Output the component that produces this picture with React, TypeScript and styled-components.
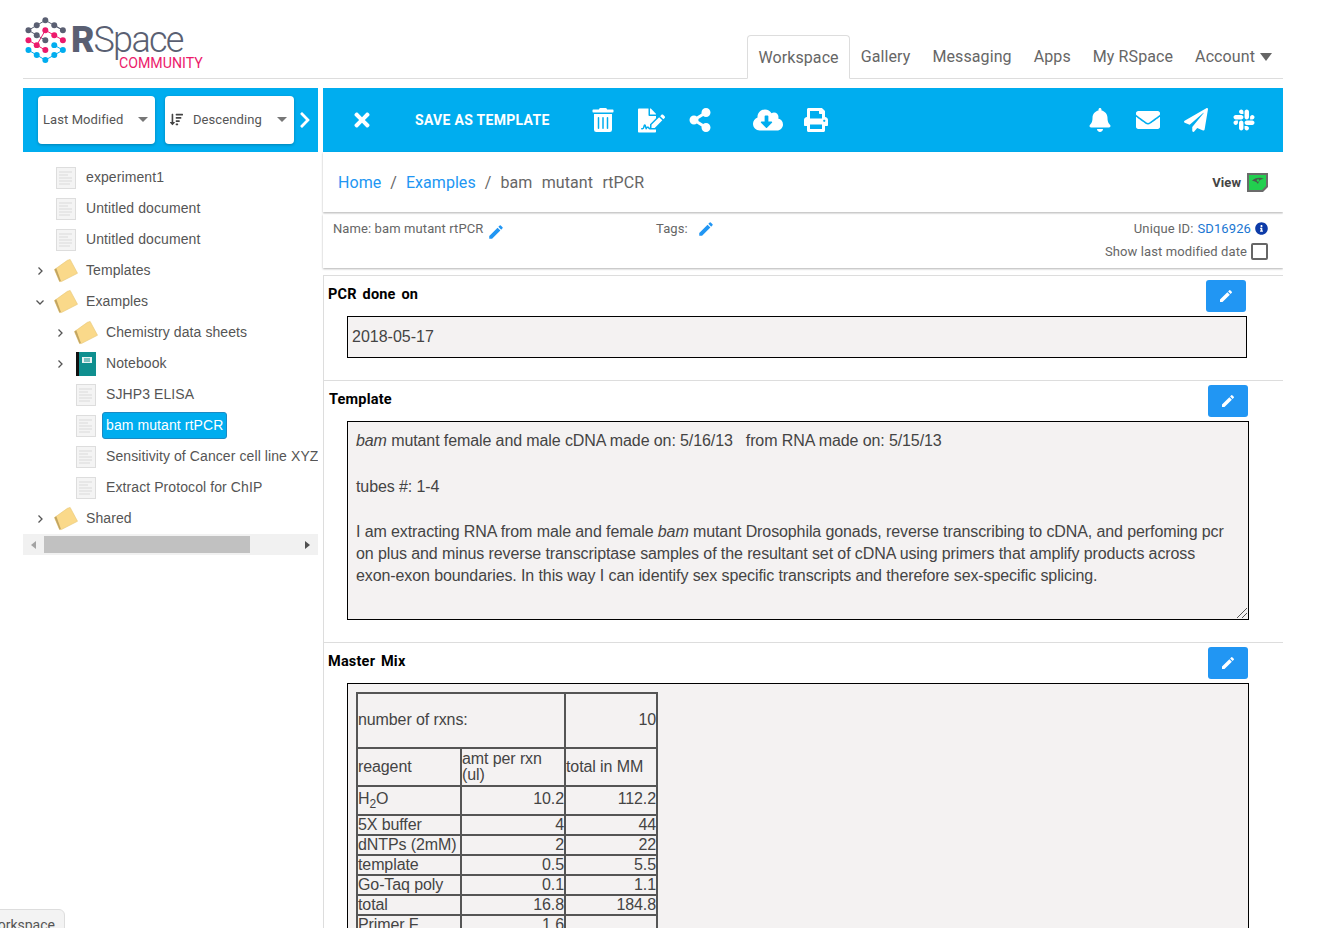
import React from 'react';
import styled, { createGlobalStyle } from 'styled-components';
import {
  FaTimes, FaTrashAlt, FaFileSignature, FaShareAlt, FaCloudDownloadAlt, FaPrint,
  FaBell, FaEnvelope, FaPaperPlane, FaSlack, FaInfoCircle, FaSortAmountDown, FaChevronRight,
} from 'react-icons/fa';
import { MdEdit } from 'react-icons/md';

const GlobalStyle = createGlobalStyle`
  html, body {
    margin: 0;
    height: 100%;
    overflow: hidden;
    background: #fff;
    font-family: Roboto, "Liberation Sans", sans-serif;
  }
`;

const Page = styled.div`
  width: 1260px;
  margin-left: 23px;
  height: 928px;
  overflow: hidden;
`;

const Header = styled.header`
  display: flex;
  justify-content: space-between;
  align-items: flex-end;
  height: 78px;
  border-bottom: 1px solid #ddd;
`;

const Logo = styled.div`
  display: flex;
  align-items: flex-start;
  align-self: flex-start;
  padding-top: 17px;
`;

const Wordmark = styled.div`
  margin-left: 2px;
  margin-top: 3px;
  display: flex;
  flex-direction: column;
  align-items: flex-end;
  color: #5a5f72;
`;

const WordLine = styled.div`
  font-size: 36px;
  line-height: 40px;
  font-weight: 300;
  letter-spacing: -1.7px;
  b { font-weight: 900; letter-spacing: -1px; }
`;

const Community = styled.div`
  margin-top: -4px;
  margin-right: -20px;
  color: #ec1a6b;
  font-size: 14.2px;
  line-height: 14px;
  font-weight: 400;
`;

const Nav = styled.nav`
  display: flex;
  align-items: flex-end;
  padding-right: 11px;
`;

const NavItem = styled.a<{ $active?: boolean; $end?: boolean }>`
  display: flex;
  align-items: center;
  height: 43px;
  padding: 0 ${(p) => (p.$end ? 0 : 11)}px 0 11px;
  box-sizing: border-box;
  font-size: 16px;
  letter-spacing: 0.1px;
  color: #666;
  ${(p) => p.$active && `
    border: 1px solid #ddd;
    border-bottom: 1px solid #fff;
    border-radius: 4px 4px 0 0;
    padding: 0 10px;
    margin-bottom: -1px;
    height: 44px;
  `}
`;

const NavCaret = styled.span`
  display: inline-block;
  margin-left: 5px;
  border-left: 6px solid transparent;
  border-right: 6px solid transparent;
  border-top: 8px solid #666;
`;

const Main = styled.main`
  display: grid;
  grid-template-columns: 295px 960px;
  column-gap: 5px;
  margin-top: 9px;
`;

const SideToolbar = styled.div`
  display: flex;
  align-items: center;
  gap: 10px;
  height: 64px;
  padding-left: 15px;
  background: #00adef;
  color: #fff;
`;

const SelectBox = styled.div<{ $w: number }>`
  display: flex;
  align-items: center;
  width: ${(p) => p.$w}px;
  height: 48px;
  padding: 0 7px 1px 5px;
  box-sizing: border-box;
  background: #fff;
  border-radius: 4px;
  box-shadow: 0 1px 3px rgba(0, 0, 0, 0.25);
  color: #555;
  font-size: 13px;
  letter-spacing: 0.08px;
  svg { color: #444; margin-right: 10px; flex: none; }
`;

const SelectLabel = styled.span`
  flex: 1;
`;

const SelectCaret = styled.span`
  border-left: 5px solid transparent;
  border-right: 5px solid transparent;
  border-top: 5px solid #777;
`;

const Expand = styled.span`
  display: flex;
  margin-left: -8px;
`;

const Tree = styled.div`
  padding-top: 9px;
  overflow: hidden;
`;

const TreeRow = styled.div<{ $level: number }>`
  display: flex;
  align-items: center;
  height: 31px;
  padding-left: ${(p) => p.$level * 20}px;
  white-space: nowrap;
  font-family: "Liberation Sans", Arial, sans-serif;
  font-size: 14px;
  letter-spacing: 0.09px;
  color: #555;
`;

const Arrow = styled.span`
  display: flex;
  justify-content: center;
  width: 34px;
  margin-top: 2px;
  flex: none;
`;

const IconSlot = styled.span`
  display: flex;
  justify-content: center;
  width: 24px;
  margin: 2px 5px 0 -3px;
  flex: none;
`;

const TreeLabel = styled.span<{ $selected?: boolean }>`
  padding: 0 3px;
  height: 27px;
  line-height: 24px;
  margin: 2px 0 0 -1px;
  box-sizing: border-box;
  border-radius: 3px;
  border: 1px solid transparent;
  ${(p) => p.$selected && `
    background: #00adef;
    border-color: #1b8ac4;
    color: #fff;
  `}
`;

const HScroll = styled.div`
  display: flex;
  align-items: center;
  justify-content: space-between;
  height: 21px;
  margin-top: 1px;
  padding: 0 8px;
  background: #f1f1f1;
`;

const ScrollThumb = styled.div`
  width: 206px;
  height: 17px;
  margin: 0 auto 0 8px;
  background: #c1c1c1;
`;

const ScrollLeft = styled.span`
  border-top: 4px solid transparent;
  border-bottom: 4px solid transparent;
  border-right: 5px solid #a3a3a3;
`;

const ScrollRight = styled.span`
  border-top: 4px solid transparent;
  border-bottom: 4px solid transparent;
  border-left: 5px solid #505050;
`;

const Toolbar = styled.div`
  display: flex;
  align-items: center;
  height: 64px;
  padding: 0 27px 0 28px;
  background: #00adef;
  color: #fff;
`;

const ToolIcon = styled.span<{ $left: number }>`
  display: flex;
  margin-left: ${(p) => p.$left}px;
`;

const SaveText = styled.span`
  margin-left: 42px;
  font-size: 14px;
  font-weight: 700;
  letter-spacing: 0.3px;
`;

const Spacer = styled.span`
  flex: 1;
`;

const Breadcrumb = styled.div`
  display: flex;
  align-items: center;
  justify-content: space-between;
  height: 60px;
  padding: 0 15px;
  box-shadow: 0 1px 2px rgba(0, 0, 0, 0.3);
  font-size: 16px;
  letter-spacing: 0.05px;
  color: #666;
`;

const Crumbs = styled.div`
  display: flex;
  gap: 9px;
  word-spacing: 5.5px;
  a { color: #2196f3; }
`;

const ViewTag = styled.div`
  display: flex;
  align-items: center;
  gap: 6px;
  font-size: 13px;
  font-weight: 700;
  color: #444;
`;

const InfoStrip = styled.div`
  display: flex;
  height: 54px;
  margin-top: 2px;
  padding: 7px 15px 0 10px;
  box-sizing: border-box;
  box-shadow: 0 1px 2px rgba(0, 0, 0, 0.3);
  font-size: 13px;
  letter-spacing: 0.1px;
  color: #666;
`;

const InfoField = styled.div<{ $w: number }>`
  display: flex;
  align-items: flex-start;
  width: ${(p) => p.$w}px;
  line-height: 15px;
`;

const Pencil = styled(MdEdit)<{ $left: number; $top: number }>`
  color: #2196f3;
  margin-left: ${(p) => p.$left}px;
  margin-top: ${(p) => p.$top}px;
`;

const InfoRight = styled.div`
  margin-left: auto;
  display: flex;
  flex-direction: column;
  align-items: flex-end;
  gap: 7px;
`;

const InfoLine = styled.div`
  display: flex;
  align-items: center;
  gap: 4px;
  line-height: 15px;
  a { color: #1976d2; }
  svg { color: #0d3ba8; }
`;

const CheckBox = styled.span`
  width: 17px;
  height: 17px;
  box-sizing: border-box;
  border: 2px solid #666;
  border-radius: 2px;
`;

const Document = styled.div`
  margin-top: 7px;
  border: 1px solid #ddd;
  border-bottom: none;
  width: 961px;
  box-sizing: border-box;
`;

const Section = styled.section<{ $pb: number; $last?: boolean }>`
  padding: 4px 0 ${(p) => p.$pb}px;
  border-bottom: ${(p) => (p.$last ? 'none' : '1px solid #ddd')};
`;

const SectionHead = styled.div<{ $pl: number; $pr: number }>`
  display: flex;
  justify-content: space-between;
  align-items: center;
  height: 32px;
  padding: 0 ${(p) => p.$pr}px 0 ${(p) => p.$pl}px;
`;

const SectionTitle = styled.h3`
  margin: 0 0 4px;
  font-size: 14.5px;
  font-weight: 700;
  letter-spacing: 0.2px;
  word-spacing: 2px;
  color: #000;
`;

const EditButton = styled.button`
  display: flex;
  align-items: center;
  justify-content: center;
  width: 40px;
  height: 32px;
  padding: 0;
  border: none;
  border-radius: 3px;
  background: #2196f3;
  color: #fff;
`;

const FieldBox = styled.div<{ $mr: number; $h?: number }>`
  position: relative;
  margin: 4px ${(p) => p.$mr}px 0 23px;
  height: ${(p) => p.$h ?? 40}px;
  border: 1px solid #000;
  background: #f4f2f2;
  font-family: "Liberation Sans", Arial, sans-serif;
  font-size: 16px;
  color: #444;
`;

const DateText = styled.div`
  padding-left: 4px;
  line-height: 39px;
`;

const Prose = styled.div`
  padding: 8px 16px 0 8px;
  line-height: 22px;
  letter-spacing: -0.1px;
`;

const ProseGap = styled.div`
  height: 23.5px;
`;

const ResizeHandle = styled.svg`
  position: absolute;
  right: 0;
  bottom: 0;
`;

const MixTable = styled.table`
  margin: 8px 0 0 8px;
  width: 302px;
  table-layout: fixed;
  border-collapse: collapse;
  font-size: 16px;
  line-height: 16px;
  letter-spacing: -0.1px;

  td {
    border: 2px solid #555;
    padding: 0;
    vertical-align: middle;
  }
`;

const MixCol = styled.col<{ $w: number }>`
  width: ${(p) => p.$w}px;
`;

const Num = styled.td`
  text-align: right;
`;

const MixRow = styled.tr<{ $h: number; $raise?: number }>`
  height: ${(p) => p.$h}px;
  td { padding-bottom: ${(p) => p.$raise ?? 0}px; }
`;

const Sub = styled.sub`
  font-size: 12px;
  line-height: 0;
`;

const FloatTab = styled.div`
  position: fixed;
  left: -20px;
  bottom: -12px;
  width: 85px;
  height: 31px;
  padding: 7px 9px 0 0;
  box-sizing: border-box;
  text-align: right;
  background: #f3f3f3;
  border: 1px solid #ddd;
  border-radius: 6px 6px 0 0;
  font-size: 14px;
  color: #555;
`;

const LogoMark = () => {
  const grey = [[133, 60], [107, 75], [160, 75], [82, 90], [186, 90], [107, 105], [133, 120]];
  const pink = [[133, 90], [160, 105], [82, 120], [186, 120], [107, 135], [133, 150]];
  const blue = [[160, 135], [82, 150], [186, 150], [107, 165], [160, 165], [133, 180]];
  const dot = (c: string) => (p: number[]) => <circle key={p.join()} cx={p[0]} cy={p[1]} r="9" fill={c} />;
  return (
    <svg width="46" height="48" viewBox="66 50 138 145">
      <path d="M133 60L82 90M133 60L186 90M107 105L82 90M107 105L133 120M186 90L160 75" stroke="#5a5f72" strokeWidth="3" fill="none" />
      <path d="M133 90L160 105L186 120M82 120L107 135L133 150M107 135L133 90" stroke="#ec1a6b" strokeWidth="3" fill="none" />
      <path d="M82 150L107 165L133 180L160 165L186 150L160 135" stroke="#00adef" strokeWidth="3" fill="none" />
      {grey.map(dot('#5a5f72'))}
      {pink.map(dot('#ec1a6b'))}
      {blue.map(dot('#00adef'))}
    </svg>
  );
};

const DocIcon = () => (
  <svg width="20" height="22" viewBox="0 0 20 22">
    <rect x="0.5" y="0.5" width="19" height="21" fill="#f4f4f4" stroke="#ddd" />
    <path d="M3 5h13M3 8h9M3 11h13M3 14h13M3 17h11" stroke="#dadada" strokeWidth="1" />
  </svg>
);

const FolderIcon = () => (
  <svg width="26" height="25" viewBox="0 0 26 25">
    <path d="M0.5 11.5L14.5 1.5L17.5 0.5L25.5 15.5L8 24.5L6 24.5Z" fill="#fad98a" stroke="#e6c573" strokeWidth="0.6" strokeLinejoin="round" />
    <path d="M0.5 11.5L6 24.5L7.5 24L2.5 10Z" fill="#c2a561" />
  </svg>
);

const NotebookIcon = () => (
  <svg width="20" height="24" viewBox="0 0 20 24">
    <rect width="20" height="24" fill="#0f8f8f" />
    <rect width="3" height="24" fill="#111" />
    <rect x="6" y="5" width="10" height="6" fill="#e9f3f3" />
    <path d="M8 7h6M8 9h6" stroke="#0f8f8f" />
  </svg>
);

const ViewIcon = () => (
  <svg width="21" height="19" viewBox="0 0 21 19">
    <path d="M0 0H21V14L16 19H0Z" fill="#6b6b6b" />
    <path d="M2 2H19V13L15 17H2Z" fill="#22cf4f" />
    <path d="M5 8C8 4 14 4 17 6C14 6 12 7 11 11C9 8 7 8 5 8Z" fill="#4a5a4e" />
    <circle cx="11" cy="7.5" r="1.2" fill="#22cf4f" />
  </svg>
);

const TreeChevron = ({ down }: { down?: boolean }) => (
  <svg width="10" height="10" viewBox="0 0 10 10" fill="none" stroke="#555" strokeWidth="1.3">
    <path d={down ? 'M1.5 3.5L5 7L8.5 3.5' : 'M3.5 1.5L7 5L3.5 8.5'} />
  </svg>
);

type TreeNode = { label: string; level: number; kind: 'doc' | 'folder' | 'book'; open?: boolean; closed?: boolean; selected?: boolean };

const nodes: TreeNode[] = [
  { label: 'experiment1', level: 0, kind: 'doc' },
  { label: 'Untitled document', level: 0, kind: 'doc' },
  { label: 'Untitled document', level: 0, kind: 'doc' },
  { label: 'Templates', level: 0, kind: 'folder', closed: true },
  { label: 'Examples', level: 0, kind: 'folder', open: true },
  { label: 'Chemistry data sheets', level: 1, kind: 'folder', closed: true },
  { label: 'Notebook', level: 1, kind: 'book', closed: true },
  { label: 'SJHP3 ELISA', level: 1, kind: 'doc' },
  { label: 'bam mutant rtPCR', level: 1, kind: 'doc', selected: true },
  { label: 'Sensitivity of Cancer cell line XYZ', level: 1, kind: 'doc' },
  { label: 'Extract Protocol for ChIP', level: 1, kind: 'doc' },
  { label: 'Shared', level: 0, kind: 'folder', closed: true },
];

const mixRows: [React.ReactNode, string, string, number][] = [
  [<>H<Sub>2</Sub>O</>, '10.2', '112.2', 29],
  ['5X buffer', '4', '44', 20],
  ['dNTPs (2mM)', '2', '22', 20],
  ['template', '0.5', '5.5', 20],
  ['Go-Taq poly', '0.1', '1.1', 20],
  ['total', '16.8', '184.8', 20],
  ['Primer F', '1.6', '', 20],
];

export default function App() {
  return (
    <Page>
      <GlobalStyle />
      <Header>
        <Logo>
          <LogoMark />
          <Wordmark>
            <WordLine><b>R</b>Space</WordLine>
            <Community>COMMUNITY</Community>
          </Wordmark>
        </Logo>
        <Nav>
          <NavItem $active>Workspace</NavItem>
          <NavItem>Gallery</NavItem>
          <NavItem>Messaging</NavItem>
          <NavItem>Apps</NavItem>
          <NavItem>My RSpace</NavItem>
          <NavItem $end>Account<NavCaret /></NavItem>
        </Nav>
      </Header>

      <Main>
        <aside>
          <SideToolbar>
            <SelectBox $w={117}>
              <SelectLabel>Last Modified</SelectLabel>
              <SelectCaret />
            </SelectBox>
            <SelectBox $w={129}>
              <FaSortAmountDown size={13} />
              <SelectLabel>Descending</SelectLabel>
              <SelectCaret />
            </SelectBox>
            <Expand><FaChevronRight size={18} /></Expand>
          </SideToolbar>
          <Tree>
            {nodes.map((n, i) => (
              <TreeRow key={i} $level={n.level}>
                <Arrow>{n.closed ? <TreeChevron /> : n.open ? <TreeChevron down /> : null}</Arrow>
                <IconSlot>
                  {n.kind === 'doc' && <DocIcon />}
                  {n.kind === 'folder' && <FolderIcon />}
                  {n.kind === 'book' && <NotebookIcon />}
                </IconSlot>
                <TreeLabel $selected={n.selected}>{n.label}</TreeLabel>
              </TreeRow>
            ))}
          </Tree>
          <HScroll>
            <ScrollLeft />
            <ScrollThumb />
            <ScrollRight />
          </HScroll>
        </aside>

        <div>
          <Toolbar>
            <FaTimes size={22} />
            <SaveText>SAVE AS TEMPLATE</SaveText>
            <ToolIcon $left={41}><FaTrashAlt size={24} /></ToolIcon>
            <ToolIcon $left={23}><FaFileSignature size={27} /></ToolIcon>
            <ToolIcon $left={23}><FaShareAlt size={24} /></ToolIcon>
            <ToolIcon $left={41}><FaCloudDownloadAlt size={30} /></ToolIcon>
            <ToolIcon $left={21}><FaPrint size={24} /></ToolIcon>
            <Spacer />
            <ToolIcon $left={0}><FaBell size={24} /></ToolIcon>
            <ToolIcon $left={24}><FaEnvelope size={24} /></ToolIcon>
            <ToolIcon $left={24}><FaPaperPlane size={24} /></ToolIcon>
            <ToolIcon $left={24}><FaSlack size={24} /></ToolIcon>
          </Toolbar>

          <Breadcrumb>
            <Crumbs>
              <a>Home</a><span>/</span><a>Examples</a><span>/</span><span>bam mutant rtPCR</span>
            </Crumbs>
            <ViewTag>View <ViewIcon /></ViewTag>
          </Breadcrumb>

          <InfoStrip>
            <InfoField $w={323}>Name: bam mutant rtPCR <Pencil size={18} $left={4} $top={2} /></InfoField>
            <InfoField $w={120}>Tags: <Pencil size={18} $left={9} $top={-1} /></InfoField>
            <InfoRight>
              <InfoLine>Unique ID: <a>SD16926</a> <FaInfoCircle size={13} /></InfoLine>
              <InfoLine>Show last modified date <CheckBox /></InfoLine>
            </InfoRight>
          </InfoStrip>

          <Document>
            <Section $pb={22}>
              <SectionHead $pl={4} $pr={37}>
                <SectionTitle>PCR done on</SectionTitle>
                <EditButton><MdEdit size={16} /></EditButton>
              </SectionHead>
              <FieldBox $mr={36} $h={40}><DateText>2018-05-17</DateText></FieldBox>
            </Section>
            <Section $pb={22}>
              <SectionHead $pl={5} $pr={35}>
                <SectionTitle>Template</SectionTitle>
                <EditButton><MdEdit size={16} /></EditButton>
              </SectionHead>
              <FieldBox $mr={34} $h={197}>
                <Prose>
                  <i>bam</i> mutant female and male cDNA made on: 5/16/13 &nbsp; from RNA made on: 5/15/13
                  <ProseGap />
                  tubes #: 1-4
                  <ProseGap />
                  I am extracting RNA from male and female <i>bam</i> mutant Drosophila gonads, reverse transcribing to cDNA, and perfoming pcr on plus and minus reverse transcriptase samples of the resultant set of cDNA using primers that amplify products across exon-exon boundaries. In this way I can identify sex specific transcripts and therefore sex-specific splicing.
                </Prose>
                <ResizeHandle width="12" height="12" viewBox="0 0 12 12">
                  <path d="M1 11L11 1M6 11L11 6" stroke="#555" fill="none" />
                </ResizeHandle>
              </FieldBox>
            </Section>
            <Section $pb={0} $last>
              <SectionHead $pl={4} $pr={35}>
                <SectionTitle>Master Mix</SectionTitle>
                <EditButton><MdEdit size={16} /></EditButton>
              </SectionHead>
              <FieldBox $mr={34} $h={400}>
                <MixTable>
                  <colgroup>
                    <MixCol $w={104} />
                    <MixCol $w={104} />
                    <MixCol $w={92} />
                  </colgroup>
                  <tbody>
                    <MixRow $h={55} $raise={2}><td colSpan={2}>number of rxns:</td><Num>10</Num></MixRow>
                    <MixRow $h={38}><td>reagent</td><td>amt per rxn (ul)</td><td>total in MM</td></MixRow>
                    {mixRows.map(([name, a, b, h], i) => (
                      <MixRow key={i} $h={h} $raise={i === 0 ? 4 : 0}><td>{name}</td><Num>{a}</Num><Num>{b}</Num></MixRow>
                    ))}
                  </tbody>
                </MixTable>
              </FieldBox>
            </Section>
          </Document>
        </div>
      </Main>
      <FloatTab>Workspace</FloatTab>
    </Page>
  );
}
